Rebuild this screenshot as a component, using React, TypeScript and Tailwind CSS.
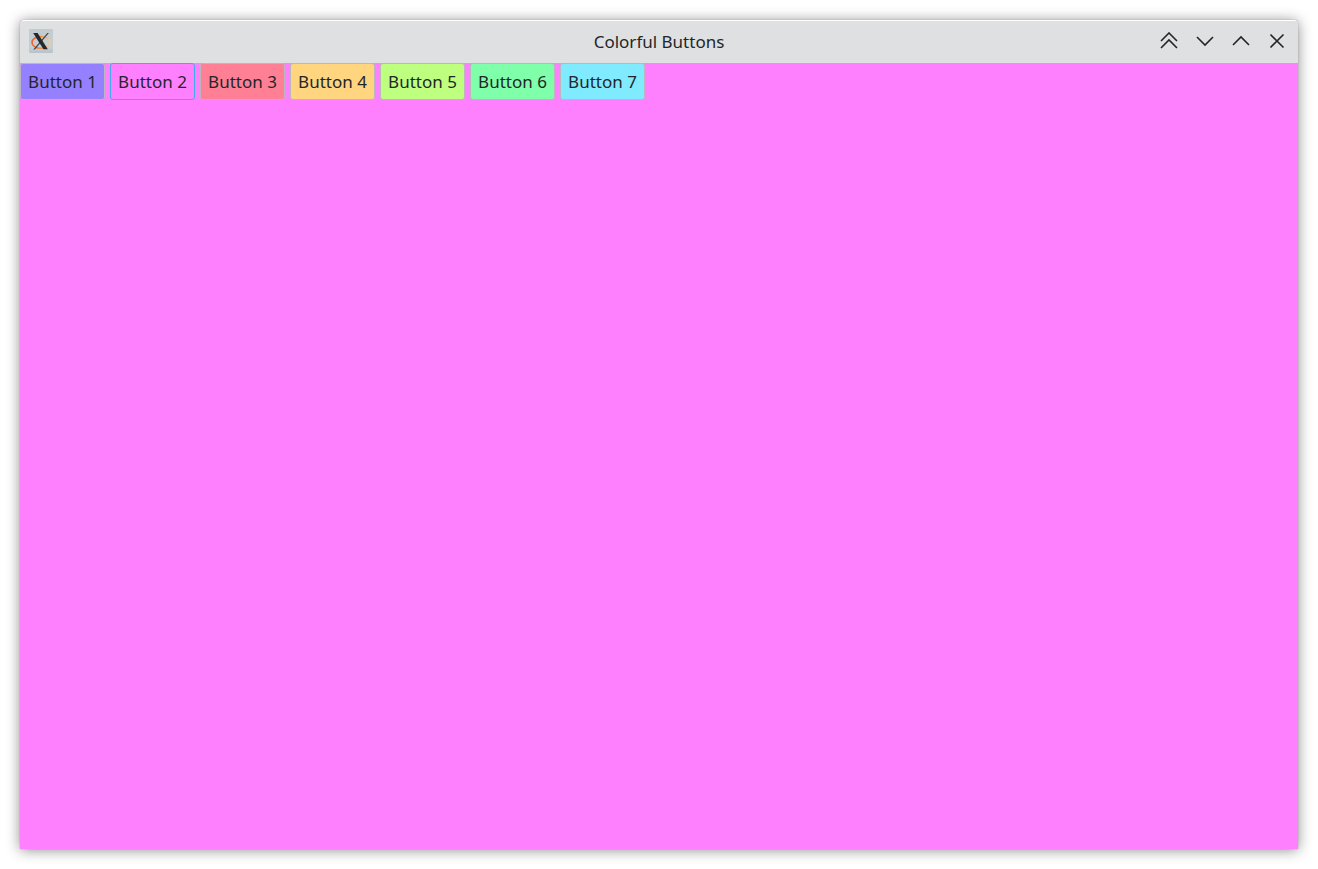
import { useState } from "react";

const buttons = [
  { label: "Button 1", fill: "bg-[#9580ff]" },
  { label: "Button 2", fill: "bg-[#ff80ff]" },
  { label: "Button 3", fill: "bg-[#ff8095]" },
  { label: "Button 4", fill: "bg-[#ffd580]" },
  { label: "Button 5", fill: "bg-[#bfff80]" },
  { label: "Button 6", fill: "bg-[#80ffaa]" },
  { label: "Button 7", fill: "bg-[#80eaff]" },
];

const controls = [
  { label: "Keep above", path: "M1 9 9 1l8 8M1 16l8-8 8 8" },
  { label: "Minimize", path: "M1 5l8 8 8-8" },
  { label: "Maximize", path: "M1 13l8-8 8 8" },
  { label: "Close", path: "M2.5 2.5l13 13M15.5 2.5l-13 13" },
];

function XLogo() {
  return (
    <svg viewBox="0 0 24 24" className="size-6" aria-hidden="true">
      <defs>
        <linearGradient id="ring" x1="0" x2="1">
          <stop offset="0" stopColor="#f0602c" />
          <stop offset="0.5" stopColor="#f08a45" />
          <stop offset="1" stopColor="#f0cf94" />
        </linearGradient>
        <linearGradient id="tile" x1="0" y1="0" x2="0" y2="1">
          <stop offset="0" stopColor="#c3cbcf" />
          <stop offset="0.75" stopColor="#c5d0d4" />
          <stop offset="1" stopColor="#b7c3c8" />
        </linearGradient>
      </defs>
      <rect width="24" height="24" rx="1" fill="url(#tile)" />
      <ellipse cx="12" cy="13.4" rx="9" ry="5.9" fill="none" stroke="url(#ring)" strokeWidth="1.6" />
      <path d="M18.3 4h1.6L6 20.400H4.300z" fill="#44484b" />
      <path d="M4.200 3.900h4.400l10.200 16.400h-4.400z" fill="#26292c" />
    </svg>
  );
}

export default function App() {
  const [selected, setSelected] = useState(1);
  return (
    <div className="flex h-screen bg-white p-5 font-['Noto_Sans','Open_Sans',sans-serif] text-[#232629]">
      <main
        className={`flex min-w-0 flex-1 flex-col rounded-t shadow-[0_0_1px_rgba(0,0,0,0.5),0_1px_14px_rgba(0,0,0,0.45)] ${buttons[selected].fill}`}
      >
        <header className="grid h-[43px] grid-cols-[1fr_auto_1fr] items-center rounded-t border-t border-white bg-[#dee0e2] px-[3px]">
          <div className="mb-0.5 pl-1.5">
            <XLogo />
          </div>
          <h1 className="text-[17px] leading-6">Colorful Buttons</h1>
          <div className="mb-0.5 flex justify-end">
            {controls.map((c) => (
              <button key={c.label} type="button" aria-label={c.label} className="flex h-9 w-9 items-center justify-center">
                <svg viewBox="0 0 18 18" className="size-[18px]" fill="none" stroke="currentColor" strokeWidth="1.6">
                  <path d={c.path} />
                </svg>
              </button>
            ))}
          </div>
        </header>
        <div className="flex flex-wrap gap-[5px]">
          {buttons.map((b, i) => (
            <button
              key={b.label}
              type="button"
              onClick={() => setSelected(i)}
              className={`h-[37px] w-[85px] rounded-[3px] border text-center text-[17px] leading-6 whitespace-nowrap ${b.fill} ${
                i === selected ? "border-[#3daee9]" : "border-[#bcb6bd]"
              }`}
            >
              {b.label}
            </button>
          ))}
        </div>
      </main>
    </div>
  );
}
